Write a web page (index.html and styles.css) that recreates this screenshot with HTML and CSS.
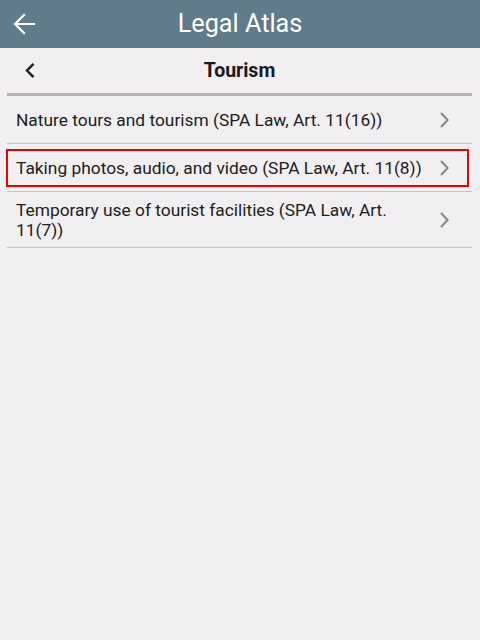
FILE: index.html
```html
<!DOCTYPE html>
<html lang="en">
<head>
<meta charset="utf-8">
<title>Legal Atlas</title>
<link rel="stylesheet" href="styles.css">
</head>
<body>
<header class="appbar">
  <span class="appbar-back">
    <svg width="24" height="24" viewBox="0 0 24 24"><path d="M3 12H22M12 3L3 12L12 21" fill="none" stroke="#fff" stroke-width="2.2" stroke-linecap="square" stroke-linejoin="miter"/></svg>
  </span>
  <h1 class="appbar-title">Legal Atlas</h1>
  <span></span>
</header>
<main class="content">
  <div class="subbar">
    <span class="subbar-back">
      <svg width="12" height="18" viewBox="0 0 12 18"><path d="M9.5 1.8L3 8.5L9.5 15.2" fill="none" stroke="#1e1e1e" stroke-width="2.4"/></svg>
    </span>
    <h2 class="subbar-title">Tourism</h2>
    <span></span>
  </div>
  <ul class="list">
    <li class="row">
      <span class="row-text">Nature tours and tourism (SPA Law, Art. 11(16))</span>
      <span class="row-chevron"><svg width="12" height="18" viewBox="0 0 12 18"><path d="M3 2L9.5 9L3 16" fill="none" stroke="#8a8a8a" stroke-width="2.2"/></svg></span>
    </li>
    <li class="row row-selected">
      <span class="row-text">Taking photos, audio, and video (SPA Law, Art. 11(8))</span>
      <span class="row-chevron"><svg width="12" height="18" viewBox="0 0 12 18"><path d="M3 2L9.5 9L3 16" fill="none" stroke="#8a8a8a" stroke-width="2.2"/></svg></span>
    </li>
    <li class="row">
      <span class="row-text">Temporary use of tourist facilities (SPA Law, Art. 11(7))</span>
      <span class="row-chevron"><svg width="12" height="18" viewBox="0 0 12 18"><path d="M3 2L9.5 9L3 16" fill="none" stroke="#8a8a8a" stroke-width="2.2"/></svg></span>
    </li>
  </ul>
</main>
</body>
</html>
```
FILE: styles.css
```css
* { box-sizing: border-box; }
html, body {
  margin: 0;
  padding: 0;
  background: #f2eff2;
  font-family: Roboto, "Liberation Sans", sans-serif;
  height: 100%;
}
.appbar {
  height: 48px;
  background: #607b89;
  display: grid;
  grid-template-columns: 48px 1fr 48px;
  align-items: center;
}
.appbar-back {
  display: flex;
  justify-content: flex-start;
  padding-left: 12px;
}
.appbar-back svg { display: block; }
.appbar-title {
  margin: 0;
  text-align: center;
  color: #fff;
  font-weight: 400;
  font-size: 25.2px;
  line-height: 48px;
}
.content {
  padding: 0 8px 0 7px;
}
.subbar {
  height: 48px;
  display: grid;
  grid-template-columns: 48px 1fr 48px;
  align-items: center;
  border-bottom: 3px solid #b6b2b6;
}
.subbar-back {
  display: flex;
  padding-left: 17px;
}
.subbar-back svg { display: block; }
.subbar-title {
  margin: 0;
  text-align: center;
  font-size: 19.5px;
  font-weight: 700;
  color: #1a1a1a;
}
.list {
  list-style: none;
  margin: 0;
  padding: 0;
}
.row {
  position: relative;
  display: flex;
  align-items: center;
  min-height: 48px;
  padding: 8px 0 7px 9px;
  border-bottom: 1px solid #c7c3c7;
}
.row-text {
  flex: 1;
  font-size: 17.35px;
  line-height: 20px;
  color: #212121;
  padding-right: 12px;
}
.row-chevron {
  width: 36px;
  flex: none;
  display: flex;
  padding-left: 2px;
}
.row-chevron svg { display: block; }
.row-selected::after {
  content: "";
  position: absolute;
  top: 5px;
  bottom: 4px;
  left: -1px;
  right: 3px;
  border: 2px solid #ee0000;
  pointer-events: none;
}
```
